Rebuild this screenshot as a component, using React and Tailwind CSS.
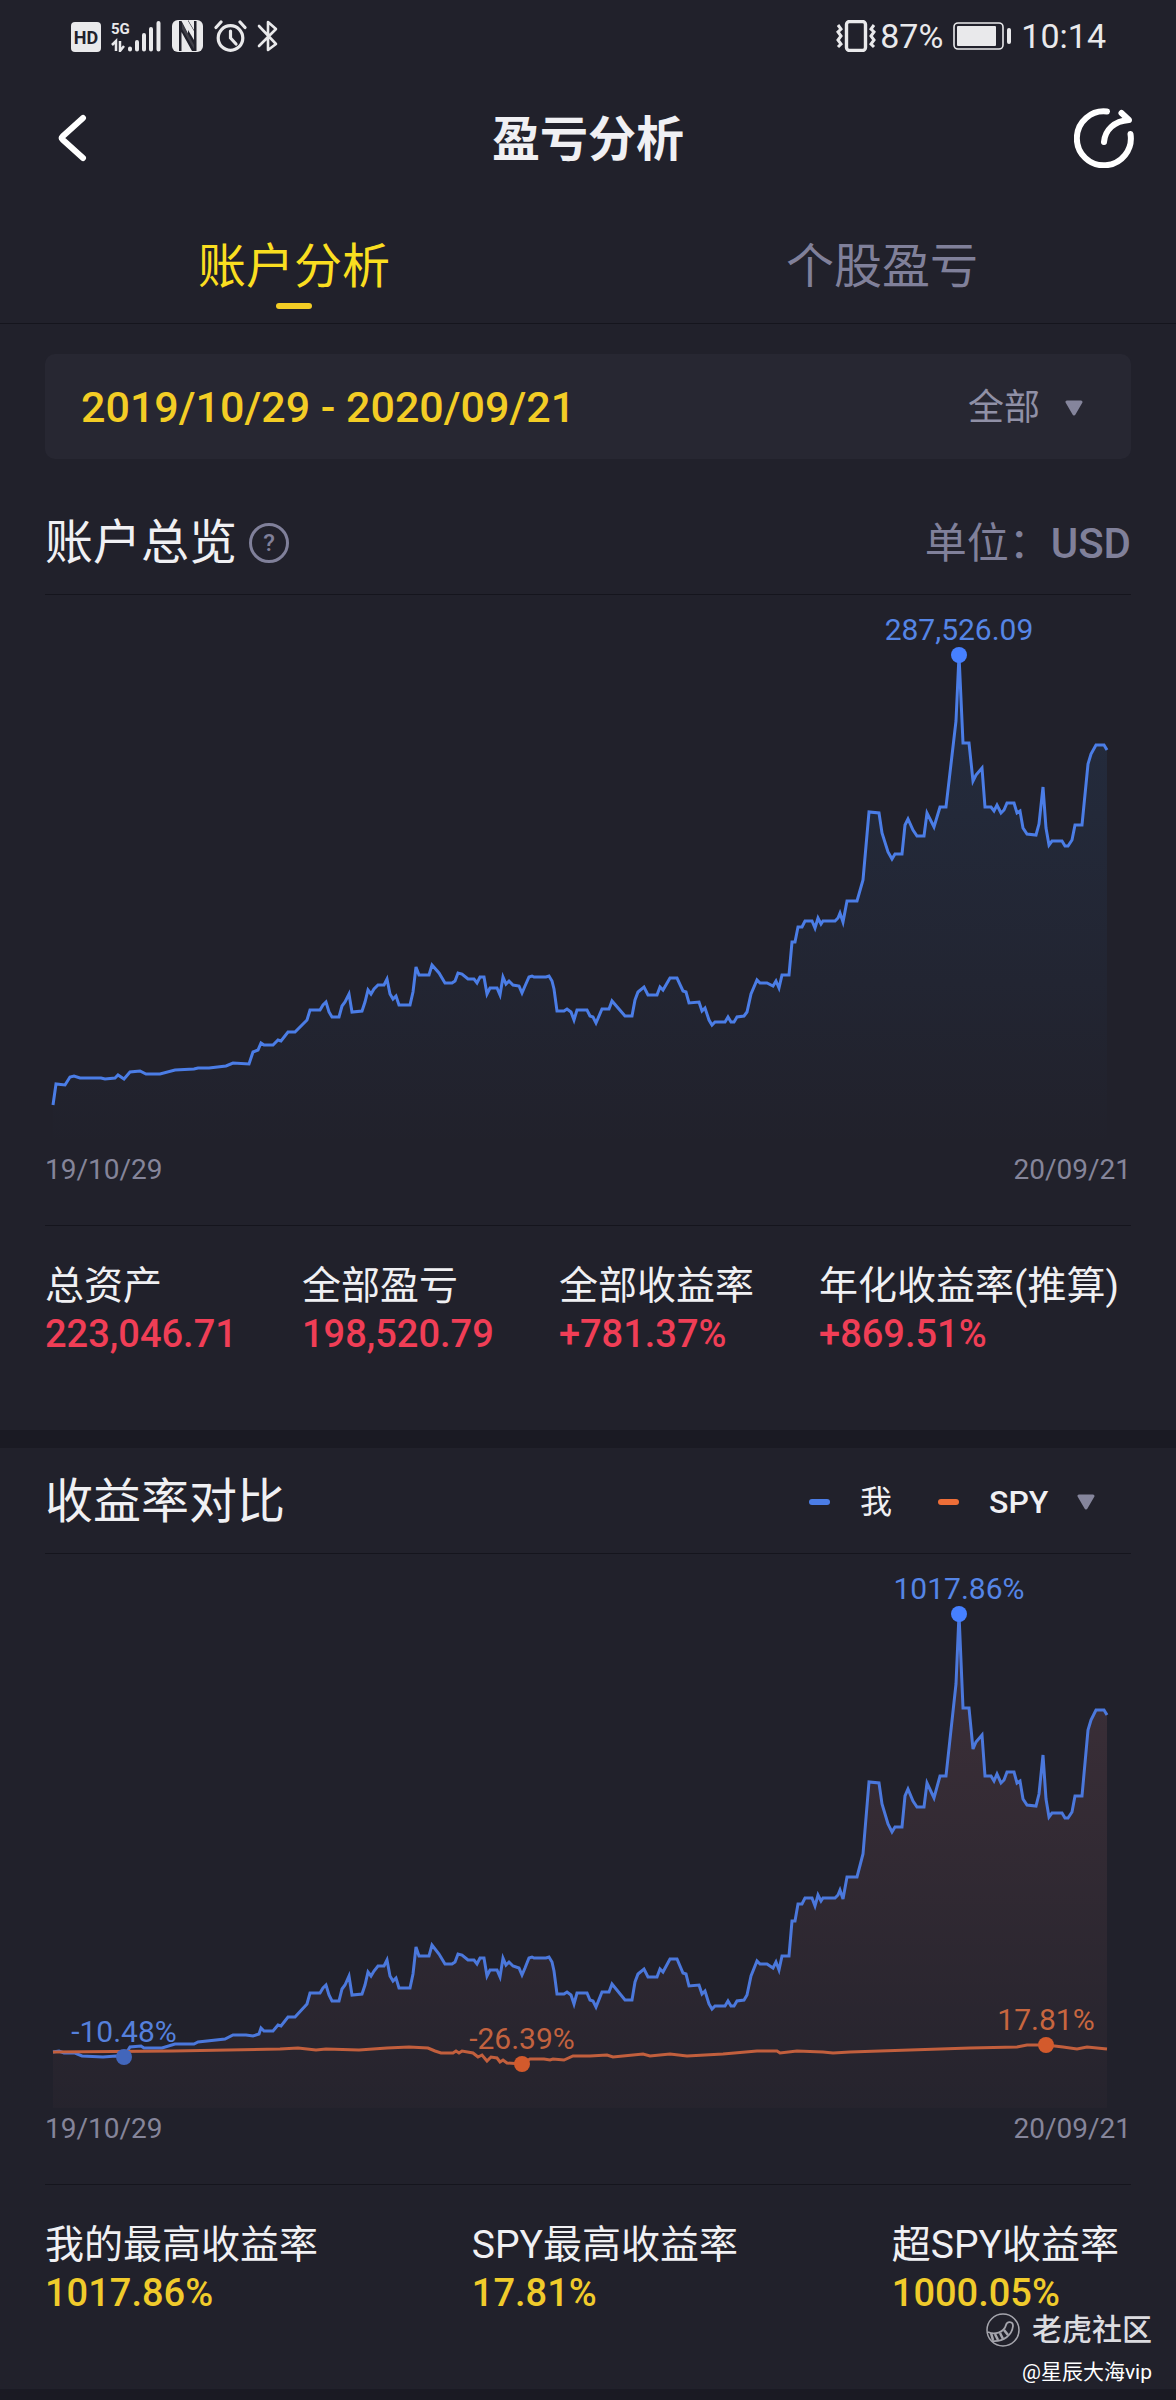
import { useState } from "react";

// [x, y] on a 1086 x 550 canvas
const inicioActivos = [
  [8, 505], [11, 484], [20, 485], [25, 477], [29, 476], [35, 478], [56, 478], [60, 479],
  [70, 478], [73, 475], [79, 479], [85, 472], [95, 471], [101, 474], [115, 474], [130, 470],
  [149, 469], [153, 468], [164, 468], [181, 466], [188, 463], [204, 464], [208, 452], [213, 450],
];

const inicioRendimiento = [
  [8, 493], [14, 492], [19, 494], [30, 494], [37, 497], [58, 498], [71, 497], [79, 498],
  [85, 488], [96, 487], [99, 489], [117, 489], [130, 485], [149, 485], [153, 483], [180, 480],
  [188, 476], [201, 476], [208, 477], [214, 475],
];

const curva = [
  [216, 443], [219, 445], [228, 445], [233, 440], [236, 441], [243, 432], [250, 432], [262, 420],
  [265, 410], [275, 410], [278, 405], [281, 402], [284, 412], [287, 417], [294, 417], [297, 406],
  [300, 402], [304, 394], [307, 412], [317, 411], [320, 402], [323, 390], [326, 394], [329, 389],
  [333, 385], [339, 385], [342, 379], [345, 394], [348, 399], [351, 396], [354, 405], [365, 405],
  [368, 392], [371, 367], [374, 375], [384, 375], [387, 365], [394, 373], [400, 383], [407, 383],
  [410, 381], [413, 373], [417, 374], [423, 379], [429, 379], [432, 383], [435, 377], [439, 377],
  [442, 394], [445, 388], [452, 388], [455, 395], [458, 377], [461, 384], [464, 381], [468, 385],
  [474, 386], [477, 393], [480, 386], [484, 377], [487, 376], [489, 377], [501, 377], [504, 376],
  [507, 381], [509, 389], [512, 411], [519, 411], [522, 409], [526, 412], [529, 420], [532, 410],
  [542, 410], [545, 416], [548, 417], [551, 423], [557, 409], [564, 409], [567, 401], [580, 416],
  [587, 416], [590, 400], [593, 392], [599, 387], [603, 395], [612, 395], [615, 387], [618, 390],
  [625, 378], [632, 378], [638, 391], [641, 392], [644, 403], [654, 402], [657, 411], [660, 408],
  [664, 420], [667, 425], [670, 422], [680, 422], [683, 417], [686, 422], [689, 422], [692, 417],
  [699, 416], [702, 412], [706, 394], [712, 380], [715, 383], [722, 383], [728, 386], [731, 381],
  [734, 388], [737, 375], [744, 375], [747, 342], [750, 342], [753, 327], [757, 327], [760, 321],
  [767, 321], [770, 328], [773, 318], [776, 324], [778, 321], [790, 321], [793, 318], [795, 313],
  [798, 322], [802, 301], [812, 301], [818, 280], [824, 212], [834, 213], [837, 233], [843, 252],
  [847, 259], [850, 254], [857, 254], [860, 225], [863, 219], [868, 230], [872, 236], [879, 236],
  [882, 213], [889, 227], [895, 207], [901, 207], [911, 121], [914, 55], [918, 143], [924, 143],
  [928, 181], [931, 175], [937, 168], [940, 207], [946, 207], [949, 211], [952, 205], [956, 213],
  [959, 210], [962, 203], [969, 203], [972, 213], [975, 211], [978, 228], [982, 234], [991, 235],
  [994, 224], [998, 187], [1001, 228], [1004, 245], [1007, 241], [1017, 241], [1020, 246],
  [1023, 246], [1027, 240], [1030, 225], [1037, 225], [1043, 164], [1046, 154], [1051, 145],
  [1059, 145], [1062, 150],
];

const spy = [
  [8, 493], [128, 492], [235, 490], [253, 489], [271, 491], [281, 490], [314, 491], [342, 489],
  [364, 488], [383, 489], [390, 492], [396, 494], [408, 494], [411, 492], [414, 494], [417, 492],
  [428, 494], [433, 498], [437, 496], [442, 502], [446, 498], [452, 499], [455, 503], [458, 501],
  [462, 504], [477, 505], [485, 500], [499, 500], [505, 501], [508, 500], [519, 501], [528, 497],
  [545, 497], [562, 496], [568, 498], [598, 495], [605, 497], [625, 495], [642, 497], [678, 495],
  [712, 492], [732, 492], [735, 494], [752, 492], [778, 493], [788, 494], [805, 493], [865, 491],
  [925, 489], [972, 488], [982, 486], [1001, 486], [1018, 488], [1032, 490], [1042, 488], [1062, 490],
];

const activos = [...inicioActivos, ...curva];
const rendimiento = [
  ...inicioRendimiento,
  ...curva.map(([x, y]) => [x, Math.round(55 + (y - 55) * 1.068)]),
];

const linea = (puntos) => puntos.map(([x, y]) => `${x},${y}`).join(" ");
const area = (puntos) => `8,549 ${linea(puntos)} 1062,549`;

const resumen = [
  { label: "总资产", value: "223,046.71" },
  { label: "全部盈亏", value: "198,520.79" },
  { label: "全部收益率", value: "+781.37%" },
  { label: "年化收益率(推算)", value: "+869.51%" },
];

const comparacion = [
  { label: "我的最高收益率", value: "1017.86%" },
  { label: "SPY最高收益率", value: "17.81%" },
  { label: "超SPY收益率", value: "1000.05%" },
];

function Triangulo() {
  return (
    <svg className="w-[18px] h-4 pointer-events-none" viewBox="0 0 18 16" aria-hidden="true">
      <path d="M2 2H16L9 14Z" fill="#85859c" stroke="#85859c" strokeWidth="3" strokeLinejoin="round" />
    </svg>
  );
}

function BarraEstado() {
  return (
    <div className="h-[72px] flex items-center justify-between pl-[71px] pr-[70px] text-[#e9e9eb]">
      <div className="flex items-center gap-2.5">
        <svg className="w-[30px] h-8" viewBox="0 0 30 32" aria-label="HD">
          <rect x="0" y="2" width="30" height="30" rx="4" fill="currentColor" />
          <text x="15" y="24" textAnchor="middle" fontSize="18" fontWeight="700" fill="#21212b">HD</text>
        </svg>
        <svg className="w-[50px] h-8" viewBox="0 0 50 32" aria-label="5G">
          <text x="0" y="14" fontSize="15" fontWeight="700" fill="currentColor">5G</text>
          <path d="M1 25L5 21V31M9 21V31L13 26" fill="none" stroke="currentColor" strokeWidth="2.5" />
          <g stroke="currentColor" strokeWidth="4" strokeLinecap="round">
            <path d="M19 28.5V29.5M26 22V29.5M33 15V29.5M40 9V29.5M47.5 3V29.5" />
          </g>
        </svg>
        <svg className="w-[33px] h-8" viewBox="0 0 33 32" aria-hidden="true">
          <rect x="1" y="0" width="31" height="32" rx="6" fill="currentColor" />
          <path d="M9 32V8L17 23V32M24 0V24L16 9V0" fill="none" />
          <path d="M8 1L10.5 1L24 27L24 31L21 31L10.500 12V31H8Z" fill="#21212b" />
          <path d="M17 0L23 10V1H25.500V31H23L22 27L17 16Z" fill="#21212b" />
          <path d="M11 3L23 25V29L11 9Z" fill="currentColor" opacity="0.15" />
          <path d="M17 1L23 11V20L17 10Z" fill="currentColor" />
        </svg>
        <svg className="w-[33px] h-8" viewBox="0 0 33 32" fill="none" stroke="currentColor" strokeWidth="3.2" aria-hidden="true">
          <circle cx="16.5" cy="18" r="12.3" />
          <path d="M16.5 11V18L22 24" strokeLinecap="round" />
          <path d="M2 7.5L7 2M31 7.5L26 2" strokeLinecap="round" />
        </svg>
        <svg className="w-[21px] h-8" viewBox="0 0 21 32" fill="none" stroke="currentColor" strokeWidth="2.6" strokeLinejoin="round" strokeLinecap="round" aria-hidden="true">
          <path d="M2 6L19 24L11 30V2L19 9L2 26" />
        </svg>
      </div>
      <div className="flex items-center text-[34px] leading-10">
        <svg className="w-10 h-8 mr-1" viewBox="0 0 40 32" fill="none" stroke="currentColor" aria-hidden="true">
          <rect x="10.5" y="1.5" width="19" height="29" rx="3" strokeWidth="3.4" />
          <path d="M2 5L5 9L2 12L5 16L2 20L5 24L2 27M38 5L35 9L38 12L35 16L38 20L35 24L38 27" strokeWidth="3" />
        </svg>
        <span>87%</span>
        <svg className="w-[58px] h-7 mx-2.5" viewBox="0 0 58 28" aria-hidden="true">
          <rect x="1" y="1" width="49" height="26" rx="4" fill="none" stroke="currentColor" strokeWidth="1.6" />
          <rect x="4" y="4" width="39" height="20" rx="1" fill="currentColor" />
          <rect x="54" y="6" width="4" height="16" rx="2" fill="currentColor" />
        </svg>
        <span>10:14</span>
      </div>
    </div>
  );
}

function Fechas() {
  return (
    <div className="h-10 flex items-center justify-between text-[28px] text-[#85859a]">
      <span>19/10/29</span>
      <span>20/09/21</span>
    </div>
  );
}

function Datos({ items, color }) {
  return (
    <dl className="mt-[35px] pt-9 pb-[72px] pr-3 flex justify-between border-t border-[#15151d]">
      {items.map((item) => (
        <div key={item.label}>
          <dt className="text-[39px] leading-[48px] text-[#f0f0f3]">{item.label}</dt>
          <dd className={`text-[38px] leading-[48px] font-medium ${color}`}>{item.value}</dd>
        </div>
      ))}
    </dl>
  );
}

export default function App() {
  const [tab, setTab] = useState("cuenta");

  const tabs = [
    { id: "cuenta", label: "账户分析" },
    { id: "acciones", label: "个股盈亏" },
  ];

  return (
    <div className="relative min-h-screen flex flex-col bg-[#1a1a23] font-['Roboto','Noto_Sans_CJK_SC',sans-serif]">
      <div className="bg-[#21212b]">
        <BarraEstado />

        <header className="h-[132px] flex items-center justify-between px-[42px]">
          <button type="button" aria-label="返回" className="w-[60px] pl-3">
            <svg className="w-9 h-12" viewBox="0 0 36 48" fill="none" stroke="#fff" strokeWidth="6" strokeLinecap="round" strokeLinejoin="round">
              <path d="M29 4L8.5 22.5Q7 24 8.5 25.5L29 44" />
            </svg>
          </button>
          <h1 className="pt-1 text-5xl font-bold text-[#f0f0f3]">盈亏分析</h1>
          <button type="button" aria-label="分享" className="w-[60px]">
            <svg className="w-[60px] h-[60px]" viewBox="0 0 60 60" fill="none" stroke="#fff" strokeWidth="6" strokeLinecap="round" strokeLinejoin="round">
              <path d="M33 3.5A27 27 0 1 0 56.5 26" />
              <path d="M30 34C31 22 40 13 55 12L47.5 5" />
            </svg>
          </button>
        </header>

        <nav className="h-[120px] pt-[31px] flex items-start border-b border-[#15151d]">
          {tabs.map((t) => (
            <button
              key={t.id}
              type="button"
              onClick={() => setTab(t.id)}
              className={`flex-1 flex flex-col items-center gap-1 text-5xl leading-[64px] ${
                tab === t.id ? "text-[#fade20]" : "text-[#80809a]"
              }`}
            >
              <span>{t.label}</span>
              {tab === t.id && <span className="w-9 h-1.5 rounded-full bg-[#f3cd25]" />}
            </button>
          ))}
        </nav>

        {/* Cuenta */}
        <section className="px-[45px]">
          <div className="mt-[30px] h-[105px] pt-0.5 pl-9 pr-12 flex items-center justify-between rounded-[10px] bg-[#272732]">
            <button type="button" className="text-[43px] font-medium text-[#f3cd25]">
              2019/10/29 - 2020/09/21
            </button>
            <label className="flex items-center gap-6 text-4xl text-[#9090a6]">
              <select aria-label="时间范围" className="appearance-none bg-transparent outline-none">
                <option>全部</option>
              </select>
              <Triangulo />
            </label>
          </div>

          <div className="mt-[33px] h-[103px] flex items-center justify-between border-b border-[#15151d]">
            <div className="flex items-center gap-3">
              <h2 className="text-5xl text-[#f0f0f3]">账户总览</h2>
              <button
                type="button"
                aria-label="说明"
                className="size-10 rounded-full border-[3px] border-[#80809a] text-2xl leading-none font-medium text-[#80809a]"
              >
                ?
              </button>
            </div>
            <span className="text-[42px] text-[#80809a]">
              单位：<span className="font-medium">USD</span>
            </span>
          </div>

          <svg className="block w-full h-auto mt-[5px]" viewBox="0 0 1086 550" role="img" aria-label="账户总览">
            <defs>
              <linearGradient id="azul" gradientUnits="userSpaceOnUse" x1="0" y1="55" x2="0" y2="549">
                <stop offset="0" stopColor="#3c8ce6" stopOpacity="0.11" />
                <stop offset="1" stopColor="#3c8ce6" stopOpacity="0" />
              </linearGradient>
            </defs>
            <polygon points={area(activos)} fill="url(#azul)" />
            <polyline points={linea(activos)} fill="none" stroke="#4b7de6" strokeWidth="3" />
            <circle cx="914" cy="55" r="8" fill="#4680ff" />
            <text x="914" y="40" textAnchor="middle" fontSize="30" fill="#5585e6">287,526.09</text>
          </svg>
          <Fechas />
          <Datos items={resumen} color="text-[#f03e56]" />
        </section>
      </div>

      {/* Comparación de rendimiento */}
      <section className="mt-[18px] px-[45px] bg-[#21212b]">
        <div className="pt-0.5 h-[106px] flex items-center justify-between border-b border-[#15151d]">
          <h2 className="text-5xl text-[#f0f0f3]">收益率对比</h2>
          <div className="flex items-center pr-9 text-[32px] text-[#f0f0f3]">
            <span className="w-[21px] h-1.5 mr-[30px] rounded-sm bg-[#4b7de6]" />
            <span>我</span>
            <span className="w-[21px] h-1.5 ml-[46px] mr-[30px] rounded-sm bg-[#ee6e38]" />
            <label className="flex items-center gap-7 font-medium">
              <select aria-label="对比指数" className="appearance-none bg-transparent outline-none">
                <option>SPY</option>
              </select>
              <Triangulo />
            </label>
          </div>
        </div>

        <svg className="block w-full h-auto mt-[5px]" viewBox="0 0 1086 550" role="img" aria-label="收益率对比">
          <defs>
            <linearGradient id="naranja" gradientUnits="userSpaceOnUse" x1="0" y1="55" x2="0" y2="549">
              <stop offset="0" stopColor="#ff9696" stopOpacity="0.13" />
              <stop offset="1" stopColor="#ff9696" stopOpacity="0.02" />
            </linearGradient>
          </defs>
          <polygon points={area(rendimiento)} fill="url(#naranja)" />
          <polyline points={linea(rendimiento)} fill="none" stroke="#4b78dc" strokeWidth="3" />
          <polyline points={linea(spy)} fill="none" stroke="#c25f3d" strokeWidth="3" />
          <circle cx="914" cy="55" r="8" fill="#4680ff" />
          <circle cx="79" cy="498" r="8" fill="#4266bb" />
          <circle cx="477" cy="505" r="8" fill="#d35a2c" />
          <circle cx="1001" cy="486" r="8" fill="#d35a2c" />
          <g fontSize="30" textAnchor="middle">
            <text x="914" y="40" fill="#5585e6">1017.86%</text>
            <text x="79" y="483" fill="#5580dc">-10.48%</text>
            <text x="477" y="490" fill="#c2623f">-26.39%</text>
            <text x="1001" y="471" fill="#c8663f">17.81%</text>
          </g>
        </svg>
        <Fechas />
        <Datos items={comparacion} color="text-[#f0cb2b]" />
      </section>

      {/* Marca de agua */}
      <div className="absolute right-6 bottom-3.5 flex flex-col items-end gap-2 text-[#dcdce0]">
        <div className="flex items-center gap-3 text-[30px] leading-10 font-medium">
          <svg className="size-[34px]" viewBox="0 0 34 34" fill="none" stroke="#a5a5ad" strokeWidth="1.5" aria-hidden="true">
            <circle cx="17" cy="17" r="16" />
            <path d="M2 19C8 22 18 20 20 12C21 8 27 8 27 13C26 22 18 29 6 28" strokeWidth="1.8" />
            <path d="M5 20L7 27M9 21L12 27M14 20L17 26M18 17L22 22" strokeWidth="2.6" />
          </svg>
          <span>老虎社区</span>
        </div>
        <p className="text-[21px] leading-7 text-white">@星辰大海vip</p>
      </div>
    </div>
  );
}
